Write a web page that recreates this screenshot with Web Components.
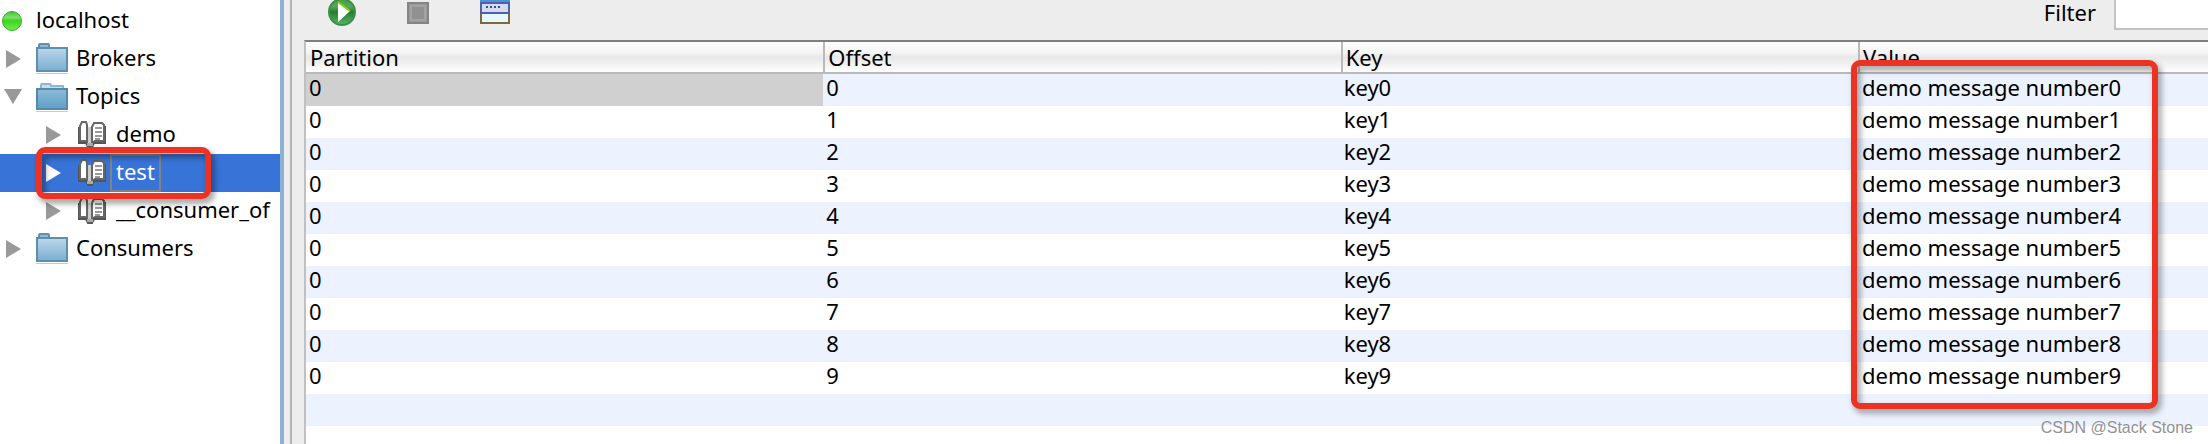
<!DOCTYPE html>
<html lang="en">
<head>
<meta charset="utf-8">
<title>Kafka topics</title>
<style>
    html, body { height: 100%; margin: 0; }
    body {
        font: 22px/32px "Noto Sans", "Open Sans", sans-serif;
        color: #000;
        overflow: hidden;
        background: #ededed;
    }
</style>
</head>
<body>
<app-shell>
    <topic-tree slot="side">
        <tree-item kind="server" open>localhost</tree-item>
        <tree-item kind="folder" level="1">Brokers</tree-item>
        <tree-item kind="folder-open" level="1" open>Topics</tree-item>
        <tree-item kind="topic" level="2">demo</tree-item>
        <tree-item kind="topic" level="2" selected>test</tree-item>
        <tree-item kind="topic" level="2">__consumer_of</tree-item>
        <tree-item kind="folder" level="1">Consumers</tree-item>
    </topic-tree>
    <message-toolbar></message-toolbar>
    <message-table count="10"></message-table>
    <water-mark slot="mark">CSDN @Stack Stone</water-mark>
</app-shell>

<script>
    const ICONS = {
        server: `<svg width="22" height="22" viewBox="0 0 22 22"><defs><linearGradient id="s" x2="0" y2="1"><stop stop-color="#3fc52d"/><stop offset=".3" stop-color="#7fe06c"/><stop offset=".5" stop-color="#3fd324"/><stop offset="1" stop-color="#70f24c"/></linearGradient></defs><circle cx="11" cy="11" r="9.5" fill="url(#s)" stroke="#35ad2a"/></svg>`,
        folder: `<svg width="32" height="32" viewBox="0 0 32 32"><defs><linearGradient id="f" x2="0" y2="1"><stop stop-color="#bcd7ea"/><stop offset="1" stop-color="#79aed0"/></linearGradient></defs><path d="M0 30h32v1H0z" fill="#c9c9c9"/><path d="M3 5V2q0-1 1-1h8q1 0 1 1v3" fill="#8fb9d3" stroke="#5f90b0" stroke-width="2"/><path d="M1 5h30v23H1z" fill="url(#f)" stroke="#5d8eac" stroke-width="2"/></svg>`,
        'folder-open': `<svg width="32" height="32" viewBox="0 0 32 32"><defs><linearGradient id="f" x2="0" y2="1"><stop stop-color="#8dbbd6"/><stop offset="1" stop-color="#5f9fc7"/></linearGradient></defs><path d="M0 30h32v1H0z" fill="#c9c9c9"/><path d="M5 8V4q0-1 1-1h8q1 0 1 1v1h12v3" fill="#c5dfee" stroke="#8cb8d2" stroke-width="2"/><path d="M1 8h30v20H1z" fill="url(#f)" stroke="#5689a8" stroke-width="2"/></svg>`,
        topic: `<svg width="28" height="28" viewBox="0 0 28 28"><path d="M0 22V6h2v15h5v2H0zM26 5h2v18h-9v-2h7z" fill="#555"/><path d="M2 21V5l2-4h4l1 3v17l-2-1H4z" fill="#fff" stroke="#666" stroke-width="2"/><path d="M14 22V6l2-4h8l2 2v16h-9z" fill="#fff" stroke="#666" stroke-width="2"/><path d="M10 6h3v16h-3z" fill="#ccc"/><path d="M17 7h7M17 11h7M17 15h7M17 18h5" stroke="#999" stroke-width="2"/><path d="M1 22h7l2 4h4l2-4h11" fill="none" stroke="#555" stroke-width="2"/><path d="M9 22h6v3H9z" fill="#aaa"/></svg>`
    };

    class AppShell extends HTMLElement {
        constructor() {
            super();
            this.attachShadow({ mode: 'open' });
            this.shadowRoot.innerHTML = `
                <style>
                    :host { display: flex; height: 100vh; overflow: hidden; position: relative; }
                    .side { flex: 0 0 280px; overflow: hidden; background: #fff; }
                    .divider { flex: 0 0 6px; background: #ededed; border-left: 4px solid #8cb0d6; border-right: 2px solid #b4b4b4; }
                    main { flex: 1; min-width: 0; display: flex; flex-direction: column; padding-left: 12px; }
                </style>
                <div class="side"><slot name="side"></slot></div>
                <div class="divider"></div>
                <main><slot></slot></main>
                <slot name="mark"></slot>
            `;
        }
    }

    class TopicTree extends HTMLElement {
        constructor() {
            super();
            this.attachShadow({ mode: 'open' });
            this.shadowRoot.innerHTML = `
                <style>
                    :host { display: block; padding-top: 2px; }
                </style>
                <slot></slot>
            `;
        }
    }

    class TreeItem extends HTMLElement {
        constructor() {
            super();
            this.attachShadow({ mode: 'open' });
            this.render();
        }

        render() {
            const level = parseInt(this.getAttribute('level')) || 0;
            const selected = this.hasAttribute('selected');
            const arrow = this.hasAttribute('open') ? 'M0 1h18L9 16z' : 'M2 0v18L17 9z';
            this.shadowRoot.innerHTML = `
                <style>
                    :host { display: flex; align-items: center; height: 38px; position: relative; white-space: nowrap; }
                    :host([level="1"]) { padding-left: 4px; }
                    :host([level="2"]) { padding-left: 44px; }
                    :host([selected]) { background: #3874d8; color: #fff; z-index: 1; }
                    svg { display: block; flex: none; }
                    .arrow { fill: #999; margin-right: 14px; }
                    :host([kind="topic"]) .arrow { margin-right: 16px; }
                    :host([selected]) .arrow { fill: #fff; }
                    .label { border: 2px solid transparent; padding: 0 4px 4px; margin-left: 2px; line-height: 30px; }
                    :host([kind="server"]) .label { margin-left: 7px; }
                    :host([kind="topic"]) .label { margin-left: 4px; }
                    :host([kind="server"]) { padding-left: 1px; }
                    :host([selected]) .label { border-color: #838383; }
                    .mark {
                        position: absolute; left: 36px; top: -7px; width: 163px; height: 40px;
                        border: 6px solid #ec3323; border-radius: 9px;
                        filter: drop-shadow(3px 4px 3px rgba(0, 0, 0, .45));
                    }
                </style>
                ${level ? `<svg class="arrow" width="18" height="18" viewBox="0 0 18 18"><path d="${arrow}"/></svg>` : ''}
                ${ICONS[this.getAttribute('kind')]}
                <span class="label"><slot></slot></span>
                ${selected ? '<div class="mark"></div>' : ''}
            `;
        }
    }

    class MessageToolbar extends HTMLElement {
        constructor() {
            super();
            this.attachShadow({ mode: 'open' });
            this.shadowRoot.innerHTML = `
                <style>
                    :host { display: flex; align-items: flex-start; height: 40px; padding-left: 24px; }
                    button { border: 0; padding: 0; background: none; display: block; height: 26px; }
                    svg { display: block; }
                    .buttons { display: flex; gap: 51px; flex: 1; }
                    label { margin-right: 18px; line-height: 24px; }
                    input {
                        box-sizing: border-box; width: 94px; height: 30px; font: inherit;
                        border: solid #c2c2c2; border-width: 0 0 2px 2px; background: #fff; outline: 0;
                    }
                </style>
                <div class="buttons">
                    <button aria-label="Play"><svg width="28" height="26" viewBox="0 2 28 26">
                        <defs><linearGradient id="g" x2="0" y2="1"><stop stop-color="#4ba23a"/><stop offset=".3" stop-color="#58a55c"/><stop offset=".5" stop-color="#2a7a30"/><stop offset="1" stop-color="#52b868"/></linearGradient></defs>
                        <circle cx="14" cy="14" r="13" fill="url(#g)" stroke="#3d8f48" stroke-width="2"/>
                        <path d="M10 4v20l12-11z" fill="#fff"/>
                        <path d="M10 4l12 9" stroke="#7fd01c" stroke-width="2"/>
                    </svg></button>
                    <button aria-label="Stop"><svg width="22" height="26" viewBox="0 0 22 26">
                        <path d="M1 3h20v20H1z" fill="#999" stroke="#858585" stroke-width="2"/>
                        <path d="M4 6h14v14H4z" fill="#919191" stroke="#a3a3a3" stroke-width="2"/>
                    </svg></button>
                    <button aria-label="Details"><svg width="30" height="26" viewBox="0 0 30 26">
                        <path d="M0 0h30v3H0z" fill="#4a94d6"/>
                        <path d="M1 3h28v10H1z" fill="#d5d9f2" stroke="#5060a8" stroke-width="2"/>
                        <path d="M6 7h16" stroke="#33508c" stroke-width="2" stroke-dasharray="2 2"/>
                        <path d="M1 14v9h28v-9" fill="#e6f8ff" stroke="#7d693a" stroke-width="2"/>
                    </svg></button>
                </div>
                <label for="filter">Filter</label>
                <input id="filter" type="text">
            `;
        }
    }

    class MessageTable extends HTMLElement {
        constructor() {
            super();
            this.attachShadow({ mode: 'open' });
            this.render();
        }

        render() {
            const count = parseInt(this.getAttribute('count')) || 0;
            let rows = '';
            for (let i = 0; i < count; i++) {
                rows += `<tr><td>0</td><td>${i}</td><td>key${i}</td><td>demo message number${i}</td></tr>`;
            }
            this.shadowRoot.innerHTML = `
                <style>
                    :host { display: block; flex: 1; position: relative; background: #fff; border-top: 2px solid #7f7f7f; border-left: 2px solid #c0c0c0; }
                    table { width: 100%; table-layout: fixed; border-collapse: separate; border-spacing: 0; }
                    th, td { padding: 0; text-align: left; font-weight: normal; white-space: nowrap; }
                    th {
                        height: 30px; line-height: 30px; padding-left: 4px;
                        border-bottom: 2px solid #bababa;
                        background: linear-gradient(#fff, #f4f4f4 35%, #e8e8e8 50%, #f0f0f0 70%, #fff);
                    }
                    th + th { border-left: 2px solid #bababa; padding-left: 3px; }
                    td { height: 32px; line-height: 26px; padding-left: 3px; vertical-align: top; }
                    td:last-child { padding-left: 4px; }
                    tr:nth-child(odd) td { background: #ecf2fe; }
                    tbody tr:first-child td:first-child { background: #d0d0d0; }
                    col { width: 27.2%; }
                    col:last-child { width: auto; }
                    .mark {
                        position: absolute; left: calc(81.6% - 7px); top: 18px; width: 295px; height: 337px;
                        border: 6px solid #ec3323; border-radius: 9px;
                        filter: drop-shadow(3px 4px 3px rgba(0, 0, 0, .4));
                    }
                </style>
                <table>
                    <colgroup><col><col><col><col></colgroup>
                    <thead><tr><th>Partition</th><th>Offset</th><th>Key</th><th>Value</th></tr></thead>
                    <tbody>${rows}<tr><td></td><td></td><td></td><td></td></tr></tbody>
                </table>
                <div class="mark"></div>
            `;
        }
    }

    class WaterMark extends HTMLElement {
        constructor() {
            super();
            this.attachShadow({ mode: 'open' });
            this.shadowRoot.innerHTML = `
                <style>
                    :host {
                        position: absolute; right: 15px; bottom: 4px;
                        font: 16px/24px "Liberation Sans", sans-serif;
                        color: #929292;
                    }
                </style>
                <slot></slot>
            `;
        }
    }

    customElements.define('app-shell', AppShell);
    customElements.define('topic-tree', TopicTree);
    customElements.define('tree-item', TreeItem);
    customElements.define('message-toolbar', MessageToolbar);
    customElements.define('message-table', MessageTable);
    customElements.define('water-mark', WaterMark);
</script>
</body>
</html>
